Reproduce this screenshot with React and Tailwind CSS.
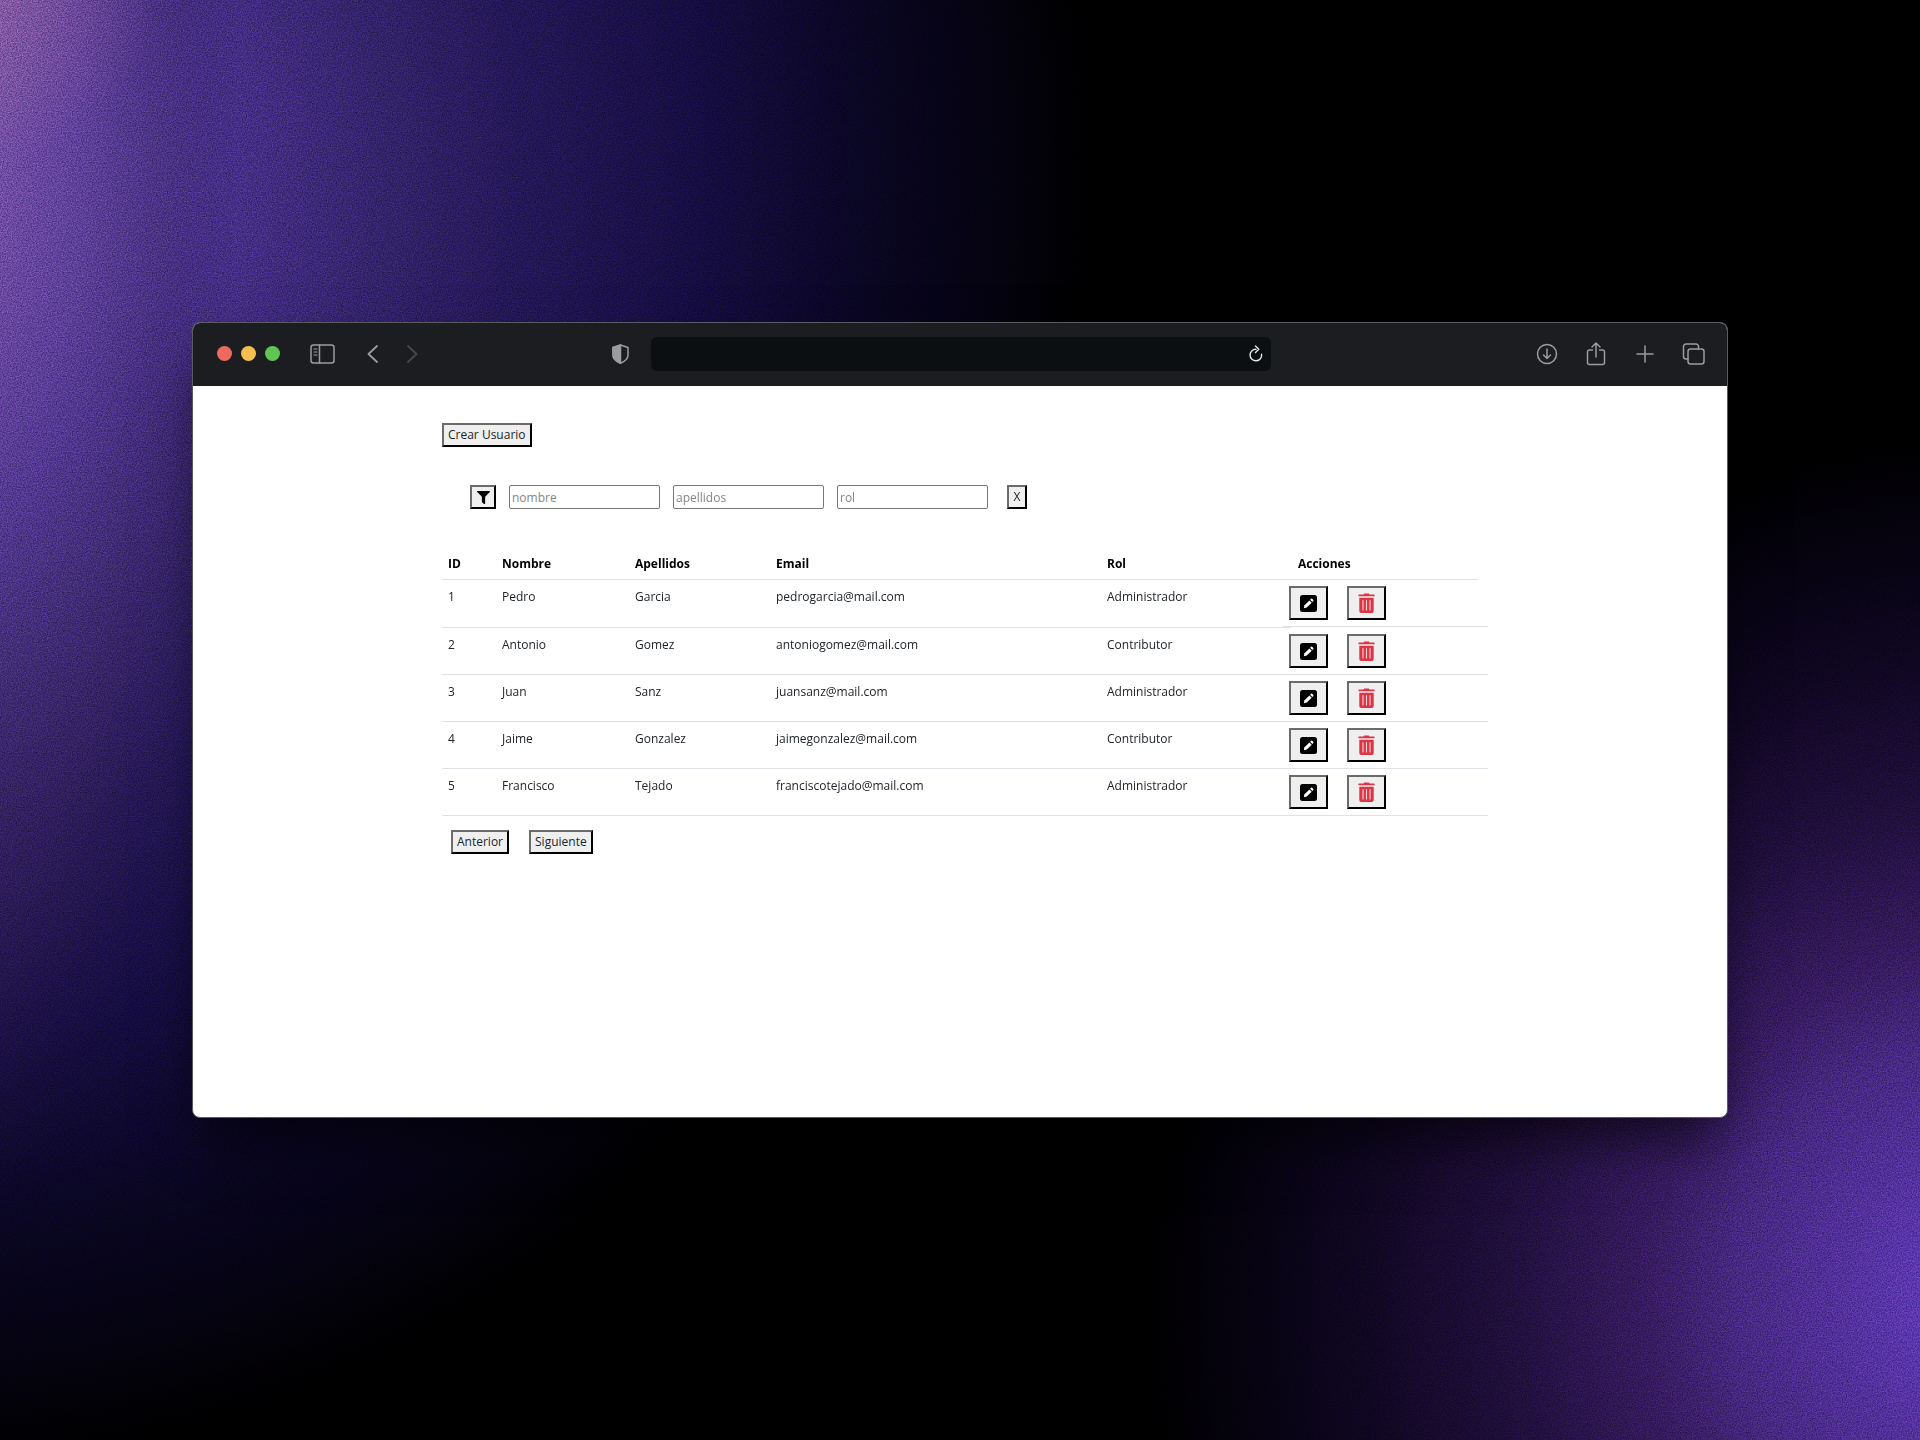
import React from "react";
import { FaFilter } from "react-icons/fa";

const users = [
  { id: 1, name: "Pedro", last: "Garcia", email: "pedrogarcia@mail.com", role: "Administrador" },
  { id: 2, name: "Antonio", last: "Gomez", email: "antoniogomez@mail.com", role: "Contributor" },
  { id: 3, name: "Juan", last: "Sanz", email: "juansanz@mail.com", role: "Administrador" },
  { id: 4, name: "Jaime", last: "Gonzalez", email: "jaimegonzalez@mail.com", role: "Contributor" },
  { id: 5, name: "Francisco", last: "Tejado", email: "franciscotejado@mail.com", role: "Administrador" },
];

function Wallpaper() {
  return (
    <svg className="absolute inset-0 h-full w-full" viewBox="0 0 1920 1440" preserveAspectRatio="none" aria-hidden="true">
      <defs>
        <radialGradient id="glow" gradientUnits="userSpaceOnUse" cx="0" cy="0" r="1" gradientTransform="translate(-120 170) scale(1240 1330)">
          <stop offset="0" stopColor="#7450b0" />
          <stop offset="0.1" stopColor="#6446a4" />
          <stop offset="0.26" stopColor="#4a328e" />
          <stop offset="0.4" stopColor="#34246c" />
          <stop offset="0.51" stopColor="#251858" />
          <stop offset="0.66" stopColor="#160d42" />
          <stop offset="0.79" stopColor="#0a0624" />
          <stop offset="0.92" stopColor="#03020c" />
          <stop offset="1" stopColor="#000" stopOpacity="0" />
        </radialGradient>
        <radialGradient id="pink" gradientUnits="userSpaceOnUse" cx="0" cy="0" r="1" gradientTransform="translate(-60 60) scale(300 1200)">
          <stop offset="0" stopColor="#9464a8" stopOpacity="0.5" />
          <stop offset="0.45" stopColor="#6a4898" stopOpacity="0.3" />
          <stop offset="0.75" stopColor="#402860" stopOpacity="0.3" />
          <stop offset="1" stopColor="#201030" stopOpacity="0" />
        </radialGradient>
        <radialGradient id="tip" gradientUnits="userSpaceOnUse" cx="-20" cy="-20" r="180">
          <stop offset="0" stopColor="#b878a8" stopOpacity="0.4" />
          <stop offset="1" stopColor="#b878a8" stopOpacity="0" />
        </radialGradient>
        <radialGradient id="corner" gradientUnits="userSpaceOnUse" cx="0" cy="0" r="1" gradientTransform="translate(2000 1300) scale(880 890)">
          <stop offset="0" stopColor="#6640bc" />
          <stop offset="0.1" stopColor="#5b37ae" />
          <stop offset="0.31" stopColor="#45277e" />
          <stop offset="0.4" stopColor="#371b60" />
          <stop offset="0.57" stopColor="#1f0e3a" />
          <stop offset="0.74" stopColor="#0e0620" />
          <stop offset="0.9" stopColor="#03010a" />
          <stop offset="1" stopColor="#000" stopOpacity="0" />
        </radialGradient>
        <filter id="grain" x="0" y="0" width="100%" height="100%" colorInterpolationFilters="sRGB">
          <feTurbulence type="fractalNoise" baseFrequency="0.8" numOctaves="2" />
          <feColorMatrix values="2 0 0 0 -0.5  2 0 0 0 -0.5  2 0 0 0 -0.5  0 0 0 0 1" />
        </filter>
      </defs>
      <rect width="1920" height="1440" fill="#000" />
      <rect width="1920" height="1440" fill="url(#glow)" />
      <rect width="1920" height="1440" fill="url(#pink)" />
      <rect width="1920" height="1440" fill="url(#tip)" />
      <rect width="1920" height="1440" fill="url(#corner)" />
      <rect width="1920" height="1440" filter="url(#grain)" className="opacity-30 mix-blend-overlay" />
    </svg>
  );
}

function ToolButton({ label, className = "", children }) {
  return (
    <button type="button" aria-label={label} className={`flex items-center justify-center ${className}`}>
      {children}
    </button>
  );
}

function Line({ w, h, children, sw = 1.5 }) {
  return (
    <svg width={w} height={h} viewBox={`0 0 ${w} ${h}`} fill="none" stroke="currentColor" strokeWidth={sw} strokeLinecap="round" strokeLinejoin="round">
      {children}
    </svg>
  );
}

function Toolbar() {
  return (
    <header className="flex h-[63px] items-center bg-[#1c1d20] pr-[22px] pb-0.5 pl-6 text-[#9a9ca0]">
      <div className="flex flex-1 items-center">
        <div className="flex gap-[9px]">
          <span className="size-[15px] rounded-full bg-[#ed6a5e]" />
          <span className="size-[15px] rounded-full bg-[#f4bf4f]" />
          <span className="size-[15px] rounded-full bg-[#61c554]" />
        </div>
        <ToolButton label="Barra lateral" className="ml-[30px]">
          <Line w={25} h={20}>
            <rect x="1" y="1" width="23" height="18" rx="2.5" />
            <path d="M9.5 1v18" />
            <path d="M4 5h3M4 8h3M4 11h3" strokeWidth="1.2" />
          </Line>
        </ToolButton>
        <ToolButton label="Atrás" className="ml-8">
          <Line w={11} h={18} sw={1.8}>
            <path d="M10 1 1.5 9 10 17" />
          </Line>
        </ToolButton>
        <ToolButton label="Adelante" className="ml-[29px] text-[#46474b]">
          <Line w={11} h={18} sw={1.8}>
            <path d="M1 1 9.500 9 1 17" />
          </Line>
        </ToolButton>
        <ToolButton label="Privacidad" className="mr-[22px] ml-auto">
          <Line w={17} h={20}>
            <path d="M8.500 1 1 3.500V11c0 4 3.500 6.500 7.500 8.200 4-1.700 7.500-4.200 7.500-8.200V3.500z" />
            <path d="M8.500 1 1 3.500V11c0 4 3.500 6.500 7.500 8.200z" fill="currentColor" />
          </Line>
        </ToolButton>
      </div>
      <div className="flex h-[34px] w-5/12 items-center rounded-md bg-[#0b0f12] pr-2">
        <input aria-label="Dirección" className="h-full min-w-0 flex-1 bg-transparent px-3 text-sm text-white outline-none" />
        <ToolButton label="Recargar" className="text-[#e4e5e7]">
          <Line w={14} h={17} sw={1.4}>
            <path d="M7 4.200A5.800 5.800 0 1 0 12.600 9.300" />
            <path d="M6.500 1 9.800 4.200 6.500 7.400" />
          </Line>
        </ToolButton>
      </div>
      <div className="flex flex-1 items-center justify-end">
        <ToolButton label="Descargas">
          <Line w={22} h={22}>
            <circle cx="11" cy="11" r="9.500" />
            <path d="M11 6v9.500M7.500 12l3.500 3.500 3.500-3.500" />
          </Line>
        </ToolButton>
        <ToolButton label="Compartir" className="ml-7">
          <Line w={20} h={26}>
            <path d="M6.500 9H3.500a2 2 0 0 0-2 2v10.500a2 2 0 0 0 2 2h13a2 2 0 0 0 2-2V11a2 2 0 0 0-2-2h-3" />
            <path d="M10 16V2.500M6 6l4-4 4 4" />
          </Line>
        </ToolButton>
        <ToolButton label="Nueva pestaña" className="ml-[30px]">
          <Line w={18} h={18}>
            <path d="M9 1v16M1 9h16" />
          </Line>
        </ToolButton>
        <ToolButton label="Pestañas" className="ml-7">
          <Line w={23} h={22}>
            <rect x="6" y="6" width="16" height="15" rx="2.500" />
            <path d="M6 16H4a2.500 2.500 0 0 1-2.500-2.500V3.500A2.500 2.500 0 0 1 4 1h10a2.500 2.500 0 0 1 2.500 2.500V6" />
          </Line>
        </ToolButton>
      </div>
    </header>
  );
}

const outset = "border-2 border-t-[#6b6b6b] border-l-[#6b6b6b] border-r-black border-b-black bg-[#efefef]";

function PlainButton({ className = "", children, ...rest }) {
  return (
    <button type="button" className={`flex h-6 items-center justify-center px-1 ${outset} ${className}`} {...rest}>
      {children}
    </button>
  );
}

function Field({ label }) {
  return (
    <input
      type="text"
      aria-label={label}
      placeholder={label}
      className="h-6 w-[151px] rounded-xs border border-[#767676] bg-white px-0.5 placeholder:text-[#858585]"
    />
  );
}

function PencilSquare() {
  return (
    <svg width="17" height="17" viewBox="0 0 17 17" aria-hidden="true">
      <rect width="17" height="17" rx="2.500" fill="#000" />
      <path d="M3.800 13.300l.7-3 4.900-4.900 2.300 2.300-4.900 4.900z" fill="#fff" />
      <path d="M10.100 4.700l.9-.9a.9.900 0 0 1 1.200 0l1.100 1.100a.9.900 0 0 1 0 1.200l-.9.900z" fill="#fff" />
    </svg>
  );
}

function TrashIcon() {
  return (
    <svg width="17" height="20" viewBox="0 0 17 20" aria-hidden="true">
      <path d="M1 1.500h4.500L6.200.5h4.600l.7 1H16a.6.600 0 0 1 .6.600v1.200H.4V2.100A.6.600 0 0 1 1 1.500z" fill="#dc3545" />
      <path d="M1.300 4.700h14.400V18a1.900 1.900 0 0 1-1.900 1.900H3.200A1.900 1.900 0 0 1 1.300 18z" fill="#dc3545" />
      <path d="M5 7.500v9.500M8.500 7.500v9.500M12 7.500v9.500" stroke="#f3d5d8" strokeWidth="1.100" strokeLinecap="round" />
    </svg>
  );
}

function UserTable() {
  const head = "border-b border-[#dee2e6] px-1.5 pt-0.5 text-left font-bold text-black";
  const cell = "border-b border-[#dee2e6] px-1.5 pt-2 align-top";
  return (
    <table className="mt-[37px] w-full table-fixed border-separate border-spacing-0">
      <colgroup>
        <col className="w-[54px]" />
        <col className="w-[133px]" />
        <col className="w-[141px]" />
        <col />
        <col className="w-[190px]" />
        <col className="w-[197px]" />
      </colgroup>
      <thead>
        <tr className="h-[34px]">
          <th className={head}>ID</th>
          <th className={head}>Nombre</th>
          <th className={head}>Apellidos</th>
          <th className={head}>Email</th>
          <th className={head}>Rol</th>
          <th className="p-0 text-left font-bold text-black">
            <div className="mr-[10px] flex h-[34px] items-center border-b border-[#dee2e6] pt-0.5 pl-[7px]">Acciones</div>
          </th>
        </tr>
      </thead>
      <tbody>
        {users.map((u) => (
          <tr key={u.id} className="h-[47px] first:h-12">
            <td className={cell}>{u.id}</td>
            <td className={cell}>{u.name}</td>
            <td className={cell}>{u.last}</td>
            <td className={cell}>{u.email}</td>
            <td className={cell}>{u.role}</td>
            <td className="p-0 align-top">
              <div className="-ml-2 flex h-[47px] gap-[19px] border-b border-[#dee2e6] pt-1.5 pl-1.5">
                <button type="button" aria-label={`Editar ${u.name}`} className={`flex h-[34px] w-[39px] items-center justify-center ${outset}`}>
                  <PencilSquare />
                </button>
                <button type="button" aria-label={`Borrar ${u.name}`} className={`flex h-[34px] w-[39px] items-center justify-center ${outset}`}>
                  <TrashIcon />
                </button>
              </div>
            </td>
          </tr>
        ))}
      </tbody>
    </table>
  );
}

export default function App() {
  return (
    <div className="relative isolate flex min-h-screen items-center justify-center overflow-hidden bg-black">
      <Wallpaper />
      <div className="relative flex min-h-[796px] w-4/5 flex-col overflow-hidden rounded-lg border border-[#5a5b5e] bg-white shadow-[0_30px_50px_-8px_rgba(0,0,0,0.6)]">
        <Toolbar />
        <main className="flex-1 pt-[37px] pr-[239px] pl-[249px] font-['Open_Sans',sans-serif] text-xs leading-[18px] text-[#212529]">
          <PlainButton>Crear Usuario</PlainButton>
          <form className="mt-[38px] flex pl-7" onSubmit={(e) => e.preventDefault()}>
            <PlainButton aria-label="Filtrar" className="w-[26px]">
              <FaFilter className="size-[13px] shrink-0 text-black" />
            </PlainButton>
            <div className="ml-[13px] flex gap-[13px]">
              <Field label="nombre" />
              <Field label="apellidos" />
              <Field label="rol" />
            </div>
            <PlainButton className="ml-[19px] w-5">X</PlainButton>
          </form>
          <UserTable />
          <div className="mt-[14px] flex gap-5 pl-[9px]">
            <PlainButton>Anterior</PlainButton>
            <PlainButton>Siguiente</PlainButton>
          </div>
        </main>
      </div>
    </div>
  );
}
